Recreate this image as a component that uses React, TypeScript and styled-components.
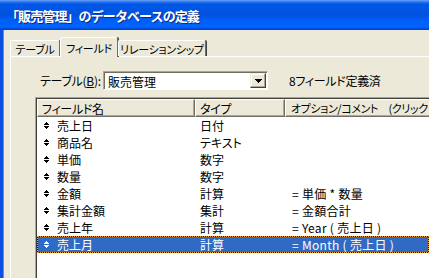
import styled, { createGlobalStyle } from "styled-components";

const GlobalStyle = createGlobalStyle`
  html, body {
    margin: 0;
    padding: 0;
    background: #ece9d8;
  }
  body {
    font-family: "Noto Sans CJK JP", "DejaVu Sans", sans-serif;
    font-size: 12px;
    color: #000;
  }
`;

interface Field {
  name: string;
  type: string;
  option: string;
}

const fields: Field[] = [
  { name: "売上日", type: "日付", option: "" },
  { name: "商品名", type: "テキスト", option: "" },
  { name: "単価", type: "数字", option: "" },
  { name: "数量", type: "数字", option: "" },
  { name: "金額", type: "計算", option: "= 単価 * 数量" },
  { name: "集計金額", type: "集計", option: "= 金額合計" },
  { name: "売上年", type: "計算", option: "= Year ( 売上日 )" },
  { name: "売上月", type: "計算", option: "= Month ( 売上日 )" },
];

const tabs = [
  { label: "テーブル", width: 50 },
  { label: "フィールド", width: 58 },
  { label: "リレーションシップ", width: 88 },
];

function SortIcon() {
  return (
    <svg width="5" height="7" viewBox="0 0 5 7" shapeRendering="crispEdges">
      <path d="M2 0h1v1H2zM1 1h3v1H1zM0 2h5v1H0zM0 4h5v1H0zM1 5h3v1H1zM2 6h1v1H2z" fill="currentColor" />
    </svg>
  );
}

export default function App() {
  const selected = 7;
  return (
    <Window>
      <GlobalStyle />
      <TitleBar>「販売管理」のデータベースの定義</TitleBar>
      <Frame>
        <TabStrip>
          {tabs.map((t, i) => (
            <Tab key={t.label} $active={i === 1} $width={t.width}>
              {t.label}
            </Tab>
          ))}
        </TabStrip>
        <Panel>
          <FormRow>
            <Label>
              テーブル(<u>B</u>):
            </Label>
            <Combo>
              <ComboText>販売管理</ComboText>
              <ComboButton>
                <svg width="7" height="4" viewBox="0 0 7 4" shapeRendering="crispEdges">
                  <path d="M0 0h7v1H0zM1 1h5v1H1zM2 2h3v1H2zM3 3h1v1H3z" fill="#000" />
                </svg>
              </ComboButton>
            </Combo>
            <Status>8フィールド定義済</Status>
          </FormRow>
          <List>
            <HeaderRow>
              <HeadCell $width={158}>フィールド名</HeadCell>
              <HeadCell $width={90}>タイプ</HeadCell>
              <HeadCell $width={200} $tight>
                オプション/コメント　(クリックし
              </HeadCell>
            </HeaderRow>
            {fields.map((f, i) => (
              <Row key={f.name} $selected={i === selected}>
                <NameCell>
                  <SortIcon />
                  <span>{f.name}</span>
                </NameCell>
                <TypeCell>{f.type}</TypeCell>
                <OptionCell>{f.option}</OptionCell>
              </Row>
            ))}
          </List>
        </Panel>
      </Frame>
    </Window>
  );
}

const Window = styled.div`
  width: 429px;
  height: 278px;
  overflow: hidden;
  display: flex;
  flex-direction: column;
`;

const TitleBar = styled.div`
  height: 30px;
  flex-shrink: 0;
  display: flex;
  align-items: center;
  padding-left: 6px;
  background: linear-gradient(
    to bottom,
    #6aa3f7 0px,
    #2a74f0 2px,
    #0058e8 4px,
    #0052de 15px,
    #005ef8 20px,
    #0064ff 27px,
    #0048da 29px,
    #003cc4 30px
  );
  color: #fff;
  font-size: 13px;
  font-weight: bold;
  letter-spacing: -0.9px;
  text-shadow: 1px 1px 0 #0a2a8a;
  white-space: nowrap;
`;

const Frame = styled.div`
  flex: 1;
  display: flex;
  flex-direction: column;
  min-height: 0;
  background: #ece9d8;
  border-left: 3px solid #0a4fe0;
  box-shadow: inset 1px 0 0 #5c8ff0;
  padding: 6px 0 0 7px;
`;

const TabStrip = styled.div`
  display: flex;
  align-items: flex-end;
  height: 20px;
  flex-shrink: 0;
  position: relative;
  z-index: 1;
`;

const Tab = styled.div<{ $active: boolean; $width: number }>`
  width: ${(p) => p.$width}px;
  height: ${(p) => (p.$active ? 20 : 16)}px;
  margin-bottom: ${(p) => (p.$active ? -1 : 0)}px;
  box-sizing: border-box;
  display: flex;
  align-items: center;
  justify-content: center;
  padding-top: ${(p) => (p.$active ? 0 : 1)}px;
  background: #ece9d8;
  border-top: 1px solid #fff;
  border-left: 1px solid #fff;
  border-right: 1px solid #716f64;
  box-shadow: 1px 0 0 #404040;
  border-radius: 2px 2px 0 0;
  font-size: 11px;
  font-feature-settings: "palt";
  letter-spacing: -0.3px;
  white-space: nowrap;
`;

const Panel = styled.div`
  flex: 1;
  min-height: 0;
  display: flex;
  flex-direction: column;
  border-top: 1px solid #fff;
  border-left: 1px solid #fff;
  padding: 14px 0 0 24px;
`;

const FormRow = styled.div`
  display: flex;
  align-items: center;
  height: 19px;
  padding-left: 5px;
  font-feature-settings: "palt";
`;

const Label = styled.span`
  width: 63px;
  white-space: nowrap;
  letter-spacing: -0.3px;

  u {
    text-underline-offset: 1px;
  }
`;

const Combo = styled.div`
  width: 165px;
  height: 19px;
  box-sizing: border-box;
  display: flex;
  align-items: center;
  background: #fff;
  border-top: 1px solid #aca899;
  border-left: 1px solid #aca899;
  border-right: 1px solid #fff;
  border-bottom: 1px solid #fff;
  box-shadow: inset 1px 1px 0 #716f64;
  padding: 1px 1px 1px 4px;
`;

const ComboText = styled.span`
  flex: 1;
  padding-top: 1px;
`;

const ComboButton = styled.div`
  width: 16px;
  height: 15px;
  box-sizing: border-box;
  display: flex;
  align-items: center;
  justify-content: center;
  background: #ece9d8;
  border-top: 1px solid #f1efe2;
  border-left: 1px solid #f1efe2;
  border-right: 1px solid #404040;
  border-bottom: 1px solid #404040;
  box-shadow: inset -1px -1px 0 #aca899, inset 1px 1px 0 #fff;
`;

const Status = styled.span`
  margin-left: 21px;
  white-space: nowrap;
  letter-spacing: -0.3px;
`;

const List = styled.div`
  margin-top: 7px;
  flex: 1;
  min-height: 0;
  background: #fff;
  border-top: 1px solid #aca899;
  border-left: 1px solid #aca899;
  box-shadow: inset 1px 1px 0 #404040;
  padding: 1px 0 0 1px;
  display: flex;
  flex-direction: column;
  font-feature-settings: "palt";
`;

const HeaderRow = styled.div`
  display: flex;
  height: 18px;
  flex-shrink: 0;
  background: #ece9d8;
`;

const HeadCell = styled.div<{ $width: number; $tight?: boolean }>`
  width: ${(p) => p.$width}px;
  flex-shrink: 0;
  box-sizing: border-box;
  display: flex;
  align-items: center;
  padding-left: ${(p) => (p.$tight ? 5 : 4)}px;
  white-space: nowrap;
  font-size: ${(p) => (p.$tight ? 11 : 12)}px;
  letter-spacing: ${(p) => (p.$tight ? "-0.4px" : "-0.3px")};
  border-top: 1px solid #fff;
  border-left: 1px solid #fff;
  border-right: 1px solid #716f64;
  border-bottom: 1px solid #716f64;
  box-shadow: inset -1px -1px 0 #aca899;
`;

const Row = styled.div<{ $selected: boolean }>`
  display: flex;
  height: 17px;
  flex-shrink: 0;
  box-sizing: border-box;
  align-items: center;
  white-space: nowrap;
  background: ${(p) => (p.$selected ? "#316ac5" : "transparent")};
  color: ${(p) => (p.$selected ? "#fff" : "#000")};
  outline: ${(p) => (p.$selected ? "1px dotted #f0a030" : "none")};
  outline-offset: -1px;
  box-shadow: ${(p) => (p.$selected ? "inset 0 0 0 1px #1a1a1a" : "none")};
`;

const NameCell = styled.div`
  width: 158px;
  flex-shrink: 0;
  display: flex;
  align-items: center;
  gap: 8px;
  padding-left: 7px;
  box-sizing: border-box;

  svg {
    flex-shrink: 0;
  }
`;

const TypeCell = styled.div`
  width: 90px;
  flex-shrink: 0;
  padding-left: 5px;
  box-sizing: border-box;
`;

const OptionCell = styled.div`
  flex: 1;
  padding-left: 7px;
  letter-spacing: 0.3px;
`;
